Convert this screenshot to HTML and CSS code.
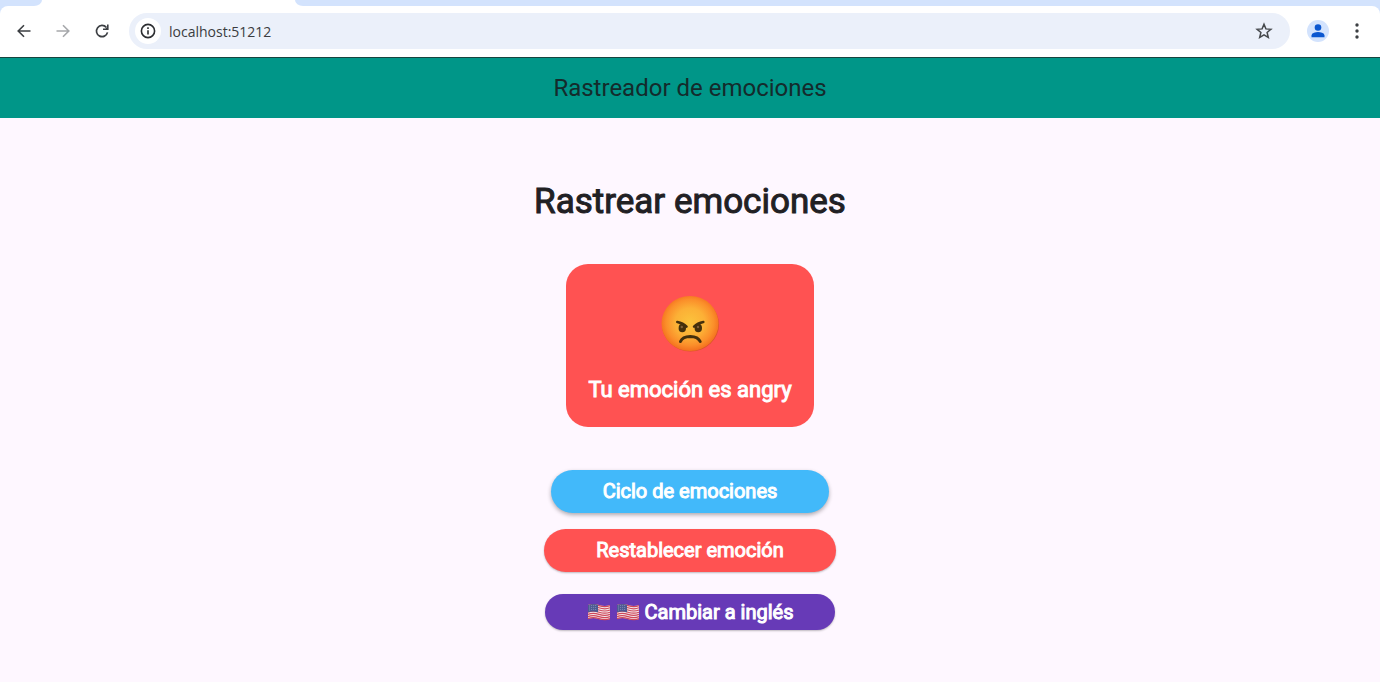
FILE: index.html
```html
<!DOCTYPE html>
<html lang="es">
<head>
<meta charset="utf-8">
<meta name="viewport" content="width=device-width, initial-scale=1">
<title>Rastreador de emociones</title>
<link rel="stylesheet" href="styles.css">
</head>
<body>
<svg class="defs" width="0" height="0" aria-hidden="true">
  <symbol id="flag-us" viewBox="0 0 24 18">
    <path fill="#f3eaec" d="M1 2Q6 0 12 2T23 2V16Q18 18 12 16T1 16Z"/>
    <path fill="none" stroke="#d0485a" stroke-width="1.2" d="M1 2.6q5-2 11 0t11 0M1 4.8q5-2 11 0t11 0M1 7q5-2 11 0t11 0M1 9.200q5-2 11 0t11 0M1 11.400q5-2 11 0t11 0M1 13.600q5-2 11 0t11 0M1 15.600q5-2 11 0t11 0"/>
    <path fill="#4c5a92" d="M1 2Q6 0 11 1.700V9.200Q6 7.600 1 9.200Z"/>
    <path fill="none" stroke="#a9b2d2" stroke-width=".8" stroke-dasharray=".8 1.200" d="M2 3.200q4-1.400 8-.4M2 5.200q4-1.400 8-.4M2 7.200q4-1.400 8-.4"/>
  </symbol>
</svg>

<header class="browser">
  <div class="tabstrip">
    <div class="strip strip-left"></div>
    <div class="tab"></div>
    <div class="strip strip-right"></div>
  </div>
  <div class="toolbar-back">
    <nav class="toolbar" aria-label="Navegador">
      <button class="tool" type="button" aria-label="Atrás">
        <svg width="16" height="16" viewBox="0 0 16 16" fill="none" stroke="#3c3f43" stroke-width="1.600"><path d="M14.500 8H2.500M8 2.200 2.200 8 8 13.800"/></svg>
      </button>
      <button class="tool" type="button" aria-label="Adelante">
        <svg width="16" height="16" viewBox="0 0 16 16" fill="none" stroke="#a6a8ab" stroke-width="1.600"><path d="M1.500 8H13.500M8 2.200 13.800 8 8 13.800"/></svg>
      </button>
      <button class="tool" type="button" aria-label="Recargar">
        <svg width="16" height="16" viewBox="0 0 16 16"><path fill="none" stroke="#3c3f43" stroke-width="1.700" d="M13.500 9.400A5.600 5.600 0 1 1 12.300 4.400"/><path fill="#3c3f43" d="M14.600 1.400V7H9V5.500H11.500L13 4V1.400Z"/></svg>
      </button>
      <div class="omnibox">
        <button class="site-info" type="button" aria-label="Información del sitio">
          <svg width="16" height="16" viewBox="0 0 16 16" fill="none" stroke="#2b2d30" stroke-width="1.600"><circle cx="8" cy="8" r="6.600"/><path d="M8 7.200V11.600M8 4.300V6"/></svg>
        </button>
        <input class="url" type="text" aria-label="Dirección" value="localhost:51212">
        <button class="star" type="button" aria-label="Añadir a marcadores">
          <svg width="18" height="18" viewBox="0 0 18 18" fill="none" stroke="#45484c" stroke-width="1.500"><path d="M9 2.300 10.900 6.900 15.900 7.300 12.100 10.500 13.300 15.400 9 12.800 4.700 15.400 5.900 10.500 2.100 7.300 7.100 6.900Z"/></svg>
        </button>
      </div>
      <button class="tool" type="button" aria-label="Perfil">
        <svg width="22" height="22" viewBox="0 0 22 22"><circle cx="11" cy="11" r="11" fill="#d3e3fd"/><g fill="#0b57d0"><circle cx="11" cy="7.500" r="3.300"/><path d="M4.500 17.200V15.500Q4.500 13.500 7 12.700 11 11.500 15 12.700 17.500 13.500 17.500 15.500V17.200Z"/></g></svg>
      </button>
      <button class="tool" type="button" aria-label="Menú">
        <svg width="4" height="16" viewBox="0 0 4 16" fill="#3c3f43"><circle cx="2" cy="2" r="1.700"/><circle cx="2" cy="8" r="1.700"/><circle cx="2" cy="14" r="1.700"/></svg>
      </button>
    </nav>
  </div>
</header>

<div class="appbar">Rastreador de emociones</div>

<main class="content">
  <h1 class="heading">Rastrear emociones</h1>
  <section class="card">
    <svg class="face" width="60" height="60" viewBox="0 0 60 60" role="img" aria-label="Enfadado">
      <defs>
        <radialGradient id="skin" cx=".5" cy=".48" r=".52">
          <stop offset="0" stop-color="#fbc33c"/>
          <stop offset=".5" stop-color="#fcb036"/>
          <stop offset=".8" stop-color="#fb8f2a"/>
          <stop offset="1" stop-color="#f4701e"/>
        </radialGradient>
      </defs>
      <ellipse cx="30.500" cy="30.500" rx="28.500" ry="27" fill="#d9552a"/>
      <ellipse cx="30" cy="29.500" rx="28.500" ry="27.500" fill="url(#skin)"/>
      <g fill="#44300c"><ellipse cx="22.300" cy="34" rx="3.700" ry="4.300"/><ellipse cx="38.300" cy="34" rx="3.700" ry="4.300"/></g>
      <g fill="none" stroke="#44300c" stroke-linecap="round"><path stroke-width="2.600" d="M17.300 28Q23 29 26.500 32.600M43.300 28Q37.600 29 34.100 32.600"/><path stroke-width="3" d="M20.500 47.500Q22.500 42.700 30.300 42.500 38 42.700 40.200 47.500"/></g>
      <g fill="#806039"><circle cx="21.800" cy="33" r="1.200"/><circle cx="38" cy="33" r="1.200"/></g>
    </svg>
    <p class="mood">Tu emoción es angry</p>
  </section>
  <div class="actions">
    <button class="btn btn-cycle" type="button">Ciclo de emociones</button>
    <button class="btn btn-reset" type="button">Restablecer emoción</button>
    <button class="btn btn-lang" type="button">
      <svg class="flag" width="24" height="18" aria-hidden="true"><use href="#flag-us"/></svg>
      <svg class="flag" width="24" height="18" aria-hidden="true"><use href="#flag-us"/></svg>
      <span>Cambiar a inglés</span>
    </button>
  </div>
</main>
</body>
</html>
```
FILE: styles.css
```css
* { box-sizing: border-box; }
body {
  margin: 0;
  min-height: 100vh;
  background: #fef7ff;
  color: #212024;
  font-family: Roboto, sans-serif;
}
button {
  border: 0;
  padding: 0;
  background: none;
  font: inherit;
  color: inherit;
  cursor: pointer;
}
svg { display: block; }
.defs { position: absolute; }

.browser { border-bottom: 1px solid #17453f; }
.tabstrip {
  display: flex;
  height: 6px;
  background: #fff;
}
.strip { background: #d3e3fd; }
.strip-left { width: 42px; border-bottom-right-radius: 8px 6px; }
.tab { width: 253px; }
.strip-right { flex: 1; border-bottom-left-radius: 8px 6px; }
.toolbar-back { background: #d3e3fd; }
.toolbar {
  display: flex;
  align-items: center;
  height: 51px;
  padding: 0 4px 1px;
  background: #fff;
  border-radius: 8px 8px 0 0;
}
.tool {
  display: grid;
  place-items: center;
  width: 39px;
  height: 36px;
}
.omnibox {
  display: flex;
  flex: 1;
  align-items: center;
  height: 36px;
  margin: 0 8px;
  padding: 0 17px 0 6px;
  border-radius: 18px;
  background: #ebf0fa;
}
.site-info {
  display: grid;
  place-items: center;
  width: 26px;
  height: 26px;
  border-radius: 50%;
  background: #fff;
}
.url {
  flex: 1;
  min-width: 0;
  margin: 0 8px;
  padding: 0;
  border: 0;
  outline: 0;
  background: none;
  color: #3a3c40;
  font: 14px "Open Sans", sans-serif;
}

.appbar {
  padding: 15px 16px;
  background: #009688;
  color: #142b2c;
  font-size: 24px;
  line-height: 30px;
  text-align: center;
}

.content {
  display: flex;
  flex-direction: column;
  align-items: center;
  padding: 63px 16px 48px;
}
.heading {
  margin: 0 0 41px;
  font-size: 35px;
  font-weight: 400;
  line-height: 42px;
  -webkit-text-stroke: 1px currentColor;
}
.card {
  display: flex;
  flex-direction: column;
  align-items: center;
  gap: 22px;
  margin-bottom: 43px;
  padding: 30px 22px 24px;
  border-radius: 22px;
  background: #ff5252;
  color: #fff;
}
.mood {
  margin: 0;
  font-size: 22px;
  line-height: 27px;
  -webkit-text-stroke: 1px currentColor;
}
.actions {
  display: flex;
  flex-direction: column;
  align-items: center;
}
.btn {
  display: flex;
  align-items: center;
  justify-content: center;
  padding: 9px 52px 10px;
  border-radius: 22px;
  color: #fff;
  font-size: 20px;
  line-height: 24px;
  -webkit-text-stroke: 1px currentColor;
}
.btn-cycle {
  margin-bottom: 16px;
  background: #42b9fa;
  box-shadow: 0 2px 4px rgba(0, 0, 0, 0.32);
}
.btn-reset {
  margin-bottom: 22px;
  background: #ff5252;
  box-shadow: 0 1px 2px rgba(0, 0, 0, 0.25);
}
.btn-lang {
  gap: 5px;
  padding: 6px 42px;
  background: #673ab7;
  box-shadow: 0 1px 2px rgba(0, 0, 0, 0.25);
}
```
